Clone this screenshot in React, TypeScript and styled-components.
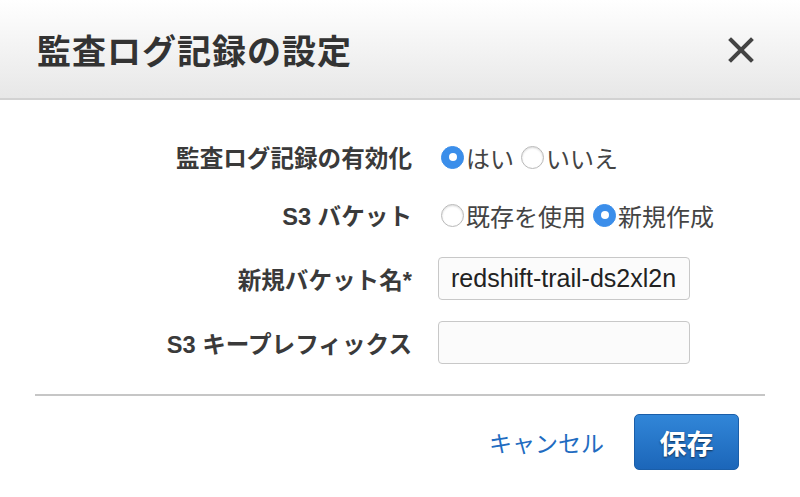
import React from 'react'
import styled, { createGlobalStyle } from 'styled-components'

const GlobalStyle = createGlobalStyle`
	html, body {
		margin: 0;
		padding: 0;
		background: #ffffff;
	}
	body {
		font-family: 'Liberation Sans', 'Noto Sans CJK JP', sans-serif;
		color: #333333;
	}
`

interface RadioOption {
	label: string
	checked: boolean
}

interface FieldRowProps {
	label: string
	offset: number
	children: React.ReactNode
}

const FieldRow: React.FC<FieldRowProps> = ({ label, offset, children }) => (
	<StyledRow $offset={offset}>
		<StyledLabel>{label}</StyledLabel>
		<StyledControl>{children}</StyledControl>
	</StyledRow>
)

const RadioGroup: React.FC<{ options: RadioOption[] }> = ({ options }) => (
	<StyledRadioGroup>
		{options.map((opt) => (
			<StyledRadioItem key={opt.label}>
				<StyledRadioDot $checked={opt.checked} />
				<span>{opt.label}</span>
			</StyledRadioItem>
		))}
	</StyledRadioGroup>
)

const App: React.FC = () => {
	return (
		<>
			<GlobalStyle />
			<StyledModal>
				<StyledHeader>
					<StyledTitle>監査ログ記録の設定</StyledTitle>
					<StyledClose aria-label="close">
						<svg width="26" height="26" viewBox="0 0 26 26">
							<path
								d="M3 3 L23 23 M23 3 L3 23"
								stroke="#444"
								strokeWidth="4"
								strokeLinecap="square"
							/>
						</svg>
					</StyledClose>
				</StyledHeader>
				<StyledBody>
					<FieldRow label="監査ログ記録の有効化" offset={37}>
						<RadioGroup
							options={[
								{ label: 'はい', checked: true },
								{ label: 'いいえ', checked: false },
							]}
						/>
					</FieldRow>
					<FieldRow label="S3 バケット" offset={18}>
						<RadioGroup
							options={[
								{ label: '既存を使用', checked: false },
								{ label: '新規作成', checked: true },
							]}
						/>
					</FieldRow>
					<FieldRow label="新規バケット名*" offset={22}>
						<StyledInput defaultValue="redshift-trail-ds2xl2n" />
					</FieldRow>
					<FieldRow label="S3 キープレフィックス" offset={21}>
						<StyledInput defaultValue="" />
					</FieldRow>
					<StyledDivider />
					<StyledFooter>
						<StyledCancel>キャンセル</StyledCancel>
						<StyledSave>保存</StyledSave>
					</StyledFooter>
				</StyledBody>
			</StyledModal>
		</>
	)
}

const StyledModal = styled.div`
	width: 800px;
	height: 497px;
	background: #ffffff;
	overflow: hidden;
`

const StyledHeader = styled.div`
	height: 98px;
	display: flex;
	align-items: center;
	justify-content: space-between;
	padding: 0 46px 0 37px;
	background: linear-gradient(to bottom, #ffffff 0%, #f3f3f3 50%, #e7e7e7 100%);
	border-bottom: 2px solid #d2d2d2;
`

const StyledTitle = styled.h1`
	margin: 0;
	font-size: 34px;
	font-weight: 700;
	color: #333333;
	letter-spacing: 1px;
`

const StyledClose = styled.div`
	display: flex;
	align-items: center;
	justify-content: center;
	width: 26px;
	height: 26px;
	margin-top: 2px;
`

const StyledBody = styled.div`
	display: flex;
	flex-direction: column;
	padding: 0 35px;
`

const StyledRow = styled.div<{ $offset: number }>`
	display: flex;
	align-items: center;
	margin-top: ${(props) => props.$offset}px;
	min-height: 40px;
`

const StyledLabel = styled.div`
	width: 377px;
	text-align: right;
	font-size: 23.6px;
	font-weight: 700;
	color: #3a3a3a;
	white-space: nowrap;
`

const StyledControl = styled.div`
	margin-left: 26px;
	display: flex;
	align-items: center;
`

const StyledRadioGroup = styled.div`
	display: flex;
	align-items: center;
	gap: 4px;
`

const StyledRadioItem = styled.label`
	display: flex;
	align-items: center;
	gap: 2px;
	font-size: 24px;
	color: #444444;
	white-space: nowrap;
`

const StyledRadioDot = styled.span<{ $checked: boolean }>`
	box-sizing: border-box;
	width: 23px;
	height: 23px;
	margin-left: 3px;
	border-radius: 50%;
	position: relative;
	background: ${(props) => (props.$checked ? '#3b8eea' : '#ffffff')};
	border: 1px solid ${(props) => (props.$checked ? '#3b8eea' : '#b9b9b9')};
	box-shadow: ${(props) =>
		props.$checked ? 'none' : 'inset 0 1px 2px rgba(0, 0, 0, 0.15)'};
	&::after {
		content: '';
		display: ${(props) => (props.$checked ? 'block' : 'none')};
		position: absolute;
		width: 8px;
		height: 8px;
		border-radius: 50%;
		background: #ffffff;
		top: 50%;
		left: 50%;
		transform: translate(-50%, -50%);
	}
`

const StyledInput = styled.input`
	box-sizing: border-box;
	width: 252px;
	height: 43px;
	padding: 0 12px;
	border: 1px solid #c8c8c8;
	border-radius: 4px;
	background: #fbfbfb;
	font-family: 'Liberation Sans', sans-serif;
	font-size: 25px;
	color: #222222;
	outline: none;
`

const StyledDivider = styled.div`
	height: 2px;
	background: #c6c6c6;
	margin-top: 30px;
`

const StyledFooter = styled.div`
	display: flex;
	justify-content: flex-end;
	align-items: center;
	gap: 30px;
	padding-right: 26px;
	margin-top: 18px;
`

const StyledCancel = styled.a`
	font-size: 23px;
	color: #1f6cc1;
	cursor: pointer;
`

const StyledSave = styled.button`
	width: 105px;
	height: 56px;
	border: 1px solid #1a5ea9;
	border-radius: 5px;
	background: linear-gradient(to bottom, #3186d8 0%, #1c66b9 100%);
	color: #ffffff;
	font-family: 'Liberation Sans', 'Noto Sans CJK JP', sans-serif;
	font-size: 27px;
	font-weight: 700;
	text-shadow: 0 1px 2px rgba(0, 0, 0, 0.6);
	cursor: pointer;
`

export default App
